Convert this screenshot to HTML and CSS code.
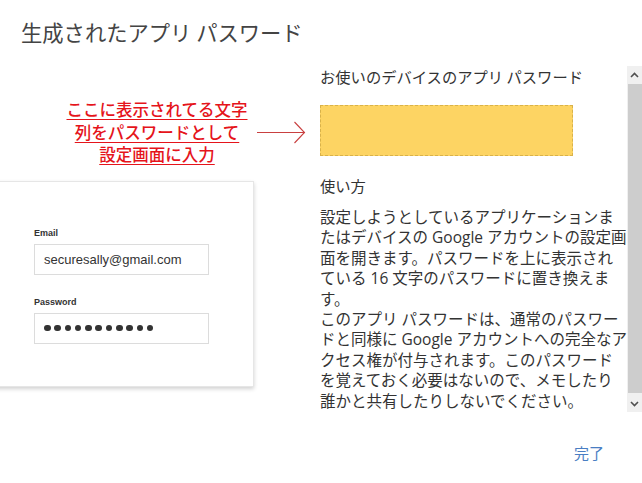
FILE: index.html
```html
<!DOCTYPE html>
<html lang="ja">
<head>
<meta charset="utf-8">
<title>生成されたアプリ パスワード</title>
<link rel="stylesheet" href="styles.css">
</head>
<body>
<div class="dialog">
  <h1 class="title">生成されたアプリ パスワード</h1>
  <div class="main">
    <div class="left">
      <div class="note">
        <p class="note-text">ここに表示されてる文字<br>列をパスワードとして<br>設定画面に入力</p>
        <svg class="arrow" width="50" height="26" viewBox="0 0 50 26">
          <path d="M1 13.5 H48.5 M38.5 3 L48.5 13.5 L38.5 24" fill="none" stroke="#c94040" stroke-width="1.1"/>
        </svg>
      </div>
      <div class="card">
        <div class="field-label">Email</div>
        <div class="field">securesally@gmail.com</div>
        <div class="field-label second">Password</div>
        <div class="field dots">
          <span></span><span></span><span></span><span></span><span></span><span></span><span></span><span></span><span></span><span></span><span></span>
        </div>
      </div>
    </div>
    <div class="pane">
      <div class="pane-content">
        <h2 class="pane-heading">お使いのデバイスのアプリ パスワード</h2>
        <div class="password-box"></div>
        <h3 class="howto">使い方</h3>
        <p class="desc">設定しようとしているアプリケーションま<br>たはデバイスの Google アカウントの設定画<br>面を開きます。パスワードを上に表示され<br>ている 16 文字のパスワードに置き換えま<br>す。<br>このアプリ パスワードは、通常のパスワー<br>ドと同様に Google アカウントへの完全なア<br>クセス権が付与されます。このパスワード<br>を覚えておく必要はないので、メモしたり<br>誰かと共有したりしないでください。</p>
      </div>
      <div class="scrollbar">
        <div class="sb-btn">
          <svg width="9" height="6" viewBox="0 0 9 6"><path d="M1 5 L4.5 1.5 L8 5" fill="none" stroke="#505050" stroke-width="1.6"/></svg>
        </div>
        <div class="sb-thumb"></div>
        <div class="sb-btn">
          <svg width="9" height="6" viewBox="0 0 9 6"><path d="M1 1 L4.5 4.5 L8 1" fill="none" stroke="#505050" stroke-width="1.6"/></svg>
        </div>
      </div>
    </div>
  </div>
  <div class="footer">
    <span class="done">完了</span>
  </div>
</div>
</body>
</html>
```

FILE: styles.css
```css
html, body {
  margin: 0;
  padding: 0;
  background: #ffffff;
}

body {
  width: 642px;
  height: 483px;
  overflow: hidden;
  font-family: "Open Sans", "Noto Sans CJK JP", sans-serif;
  color: #333333;
}

.dialog {
  display: flex;
  flex-direction: column;
}

.title {
  margin: 0;
  padding: 20px 0 0 21px;
  font-family: "Noto Sans CJK JP", sans-serif;
  font-size: 21.3px;
  line-height: 24px;
  font-weight: 400;
  color: #444444;
}

.main {
  display: grid;
  grid-template-columns: 320px 322px;
}

.left {
  display: flex;
  flex-direction: column;
}

.note {
  display: flex;
  align-items: center;
  margin-top: 54px;
  padding-left: 57px;
}

.note-text {
  margin: 0;
  width: 200px;
  text-align: center;
  font-family: "Noto Sans CJK JP", sans-serif;
  font-size: 16.5px;
  line-height: 22.5px;
  font-weight: 500;
  color: #e5141b;
  text-decoration: underline;
  text-decoration-thickness: 1px;
  text-underline-offset: 3px;
}

.arrow {
  display: block;
  margin-left: -1px;
}

.card {
  margin-top: 15px;
  margin-left: -20px;
  width: 274px;
  height: 206px;
  box-sizing: border-box;
  padding: 45px 0 0 53px;
  background: #ffffff;
  border: 1px solid #e6e6e6;
  box-shadow: 0 2px 4px rgba(0, 0, 0, 0.18);
  font-family: "Liberation Sans", Arial, sans-serif;
}

.field-label {
  font-size: 9px;
  line-height: 12px;
  font-weight: 700;
  color: #333333;
  margin-bottom: 5px;
}

.field-label.second {
  margin-top: 21px;
}

.field {
  width: 175px;
  height: 31px;
  box-sizing: border-box;
  border: 1px solid #dcdcdc;
  padding-left: 9px;
  font-size: 13px;
  line-height: 29px;
  color: #333333;
}

.dots {
  display: flex;
  align-items: center;
  gap: 3.8px;
}

.dots span {
  width: 6.5px;
  height: 6.5px;
  border-radius: 50%;
  background: #333333;
}

.pane {
  margin-top: 22px;
  height: 346px;
  display: flex;
}

.pane-content {
  width: 307px;
  white-space: nowrap;
}

.pane-heading {
  margin: 0;
  font-family: "Noto Sans CJK JP", sans-serif;
  font-size: 15.3px;
  line-height: 20px;
  font-weight: 400;
  color: #333333;
}

.password-box {
  margin-top: 19px;
  width: 253px;
  height: 51px;
  box-sizing: border-box;
  background: #fdd463;
  border: 1px dashed #d9b24a;
}

.howto {
  margin: 19px 0 0;
  font-family: "Noto Sans CJK JP", sans-serif;
  font-size: 15.3px;
  line-height: 20px;
  font-weight: 400;
  color: #333333;
}

.desc {
  margin: 12px 0 0;
  font-size: 15.5px;
  line-height: 20.4px;
  color: #333333;
}

.scrollbar {
  width: 15px;
  flex: none;
  display: flex;
  flex-direction: column;
  background: #f0f0f0;
}

.sb-btn {
  height: 17px;
  display: flex;
  align-items: center;
  justify-content: center;
}

.sb-thumb {
  flex: 1;
  margin: 1px 0 2px 1px;
  background: #cdcdcd;
}

.footer {
  display: flex;
  justify-content: flex-end;
  padding-right: 38px;
  margin-top: 31px;
}

.done {
  font-family: "Noto Sans CJK JP", sans-serif;
  font-size: 15px;
  line-height: 20px;
  color: #4a7ec3;
}
```
